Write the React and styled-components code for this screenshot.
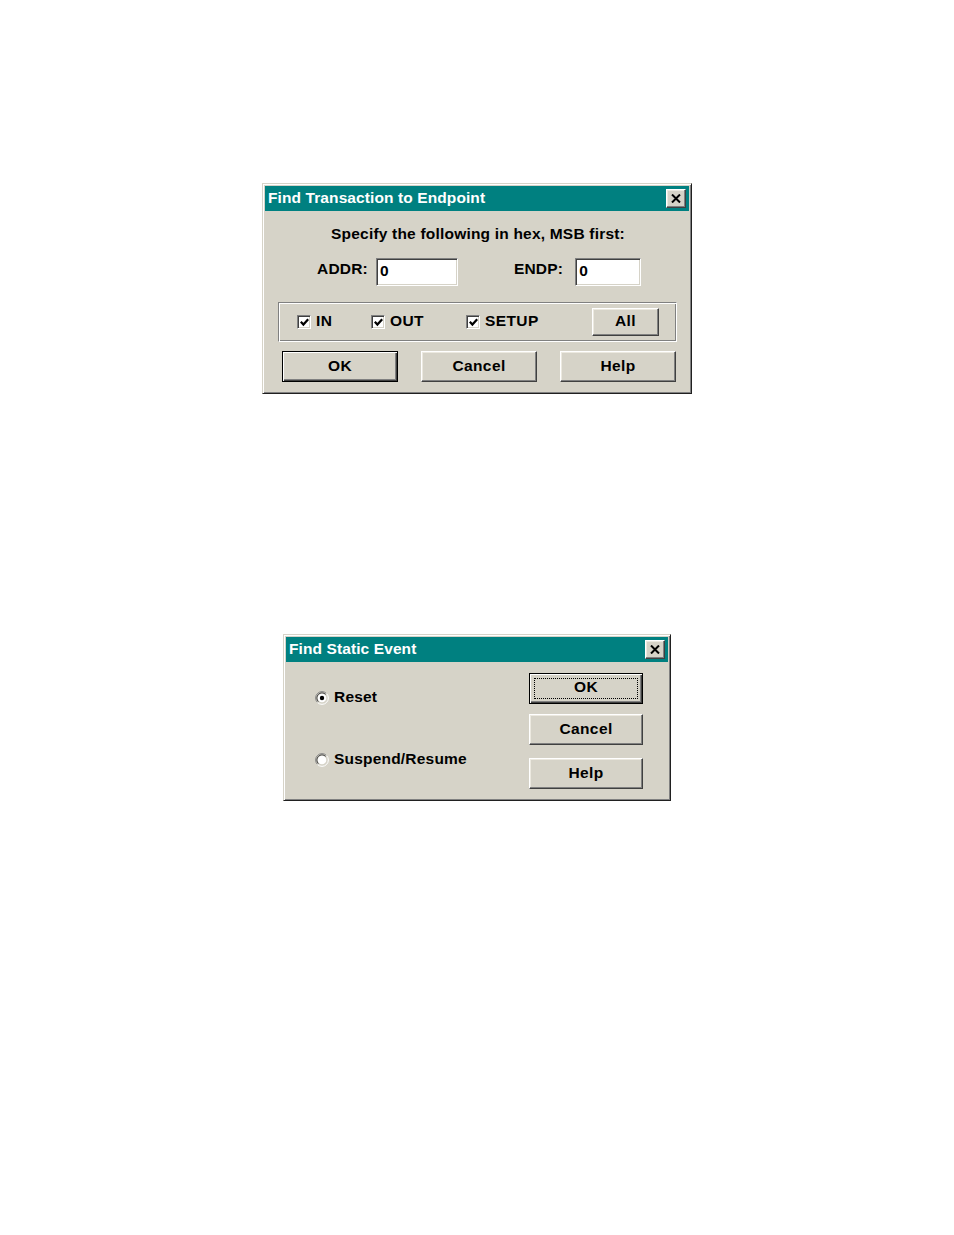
import React from "react";
import styled, { createGlobalStyle, css } from "styled-components";

const GlobalStyle = createGlobalStyle`
  html, body {
    margin: 0;
    padding: 0;
    background: #ffffff;
  }
  body {
    font-family: "Liberation Sans", Arial, sans-serif;
  }
`;

const face = "#d6d3c8";

const raised = css`
  background: ${face};
  border-top: 1px solid #ffffff;
  border-left: 1px solid #ffffff;
  border-right: 1px solid #404040;
  border-bottom: 1px solid #404040;
  box-shadow: inset -1px -1px 0 #808080, inset 1px 1px 0 #ece9e0;
`;

const sunken = css`
  border-top: 1px solid #808080;
  border-left: 1px solid #808080;
  border-right: 1px solid #ffffff;
  border-bottom: 1px solid #ffffff;
  box-shadow: inset 1px 1px 0 #404040, inset -1px -1px 0 ${face};
`;

const Page = styled.div`
  display: flex;
  flex-direction: column;
  align-items: flex-start;
  width: 954px;
  min-height: 1235px;
`;

const Window = styled.div`
  box-sizing: border-box;
  width: ${(p) => p.$w}px;
  height: ${(p) => p.$h}px;
  margin-top: ${(p) => p.$top}px;
  margin-left: ${(p) => p.$left}px;
  background: ${face};
  border-top: 1px solid ${face};
  border-left: 1px solid ${face};
  border-right: 1px solid #202020;
  border-bottom: 1px solid #202020;
  box-shadow: inset 1px 1px 0 #ffffff, inset -1px -1px 0 #808080;
  padding: 2px;
  display: flex;
  flex-direction: column;
  color: #000;
  font-weight: bold;
  font-size: 15.5px;
  letter-spacing: 0.2px;
`;

const TitleBar = styled.div`
  height: 25px;
  background: #008080;
  display: flex;
  align-items: center;
  justify-content: space-between;
  padding: 0 3px 0 3px;
  flex-shrink: 0;
`;

const Title = styled.span`
  color: #ffffff;
  font-size: 15.5px;
  font-weight: bold;
  letter-spacing: 0.1px;
  padding-bottom: 1px;
`;

const CloseBox = styled.div`
  box-sizing: border-box;
  width: 20px;
  height: 19px;
  ${raised};
  display: flex;
  align-items: center;
  justify-content: center;
`;

const Close = () => (
  <CloseBox>
    <svg width="10" height="9" viewBox="0 0 10 9">
      <path d="M1 0.5 L9 8.5 M9 0.5 L1 8.5" stroke="#000" strokeWidth="2" />
    </svg>
  </CloseBox>
);

/* ---------- dialog 1 ---------- */

const Body1 = styled.div`
  display: flex;
  flex-direction: column;
  padding: 14px 0 9px 0;
`;

const Prompt = styled.div`
  height: 18px;
  line-height: 18px;
  text-align: center;
  padding-left: 2px;
`;

const FieldRow = styled.div`
  display: flex;
  align-items: center;
  margin-top: 15px;
  height: 28px;
  padding-left: 52px;
`;

const Label = styled.span`
  margin-left: ${(p) => p.$ml || 0}px;
  margin-right: ${(p) => p.$mr}px;
  padding-bottom: 6px;
`;

const Input = styled.div`
  box-sizing: border-box;
  width: ${(p) => p.$w}px;
  height: 28px;
  background: #ffffff;
  ${sunken};
  font-size: 15.5px;
  line-height: 23px;
  padding-left: 3px;
`;

const Group = styled.div`
  box-sizing: border-box;
  margin: 16px 12px 0 13px;
  height: 40px;
  border-top: 1px solid #808080;
  border-left: 1px solid #808080;
  border-right: 1px solid #ffffff;
  border-bottom: 1px solid #ffffff;
  box-shadow: inset 1px 1px 0 #ffffff, inset -1px -1px 0 #808080;
  display: grid;
  grid-template-columns: 74px 95px 126px 67px;
  align-items: center;
  padding-left: 18px;
`;

const Check = styled.label`
  display: flex;
  align-items: center;
  gap: 5px;
  letter-spacing: 0.4px;
`;

const CheckText = styled.span`
  padding-bottom: 3px;
`;

const CheckBox = styled.span`
  box-sizing: border-box;
  width: 14px;
  height: 14px;
  background: #ffffff;
  ${sunken};
  display: flex;
  align-items: center;
  justify-content: center;
`;

const CheckItem = ({ children }) => (
  <Check>
    <CheckBox>
      <svg width="9" height="9" viewBox="0 0 9 9">
        <path d="M0.8 3.8 L3.4 6.6 L8.2 1.2" stroke="#000" strokeWidth="2.2" fill="none" />
      </svg>
    </CheckBox>
    <CheckText>{children}</CheckText>
  </Check>
);

const Button = styled.div`
  box-sizing: border-box;
  width: ${(p) => p.$w}px;
  height: ${(p) => p.$h}px;
  margin-top: ${(p) => p.$mt || 0}px;
  ${raised};
  display: flex;
  align-items: center;
  justify-content: center;
  padding-bottom: 2px;
  letter-spacing: 0.4px;
  ${(p) =>
    p.$default &&
    css`
      border: 1px solid #000;
      box-shadow: inset 1px 1px 0 #ffffff, inset -1px -1px 0 #404040,
        inset -2px -2px 0 #808080;
    `}
`;

const FocusRing = styled.span`
  box-sizing: border-box;
  display: flex;
  align-items: center;
  justify-content: center;
  width: calc(100% - 8px);
  height: calc(100% - 6px);
  border: 1px dotted #000;
  padding-bottom: 3px;
  margin-top: 2px;
`;

const ButtonRow = styled.div`
  display: flex;
  gap: 23px;
  margin-top: 9px;
  padding-left: 17px;
`;

/* ---------- dialog 2 ---------- */

const Body2 = styled.div`
  display: grid;
  grid-template-columns: 1fr 114px;
  padding: 11px 25px 0 0;
`;

const Radios = styled.div`
  display: flex;
  flex-direction: column;
  gap: 42px;
  padding: 15px 0 0 29px;
`;

const Radio = styled.label`
  display: flex;
  align-items: center;
  gap: 5px;
  height: 20px;
`;

const RadioText = styled.span`
  padding-bottom: 3px;
`;

const RadioDot = ({ on }) => (
  <svg width="14" height="14" viewBox="0 0 14 14">
    <path d="M11.5 2.5 A6 6 0 0 0 2.5 11.5" stroke="#808080" strokeWidth="1" fill="none" />
    <path d="M10.6 3.4 A4.8 4.8 0 0 0 3.4 10.6" stroke="#404040" strokeWidth="1" fill="none" />
    <path d="M2.5 11.5 A6 6 0 0 0 11.5 2.5" stroke="#ffffff" strokeWidth="1" fill="none" />
    <circle cx="7" cy="7" r="4.3" fill="#ffffff" />
    {on && <circle cx="7" cy="7" r="2.2" fill="#000" />}
  </svg>
);

const Stack = styled.div`
  display: flex;
  flex-direction: column;
  gap: 10px;
`;

export default function App() {
  return (
    <>
      <GlobalStyle />
      <Page>
        <Window $w={430} $h={211} $top={183} $left={262}>
          <TitleBar>
            <Title>Find Transaction to Endpoint</Title>
            <Close />
          </TitleBar>
          <Body1>
            <Prompt>Specify the following in hex, MSB first:</Prompt>
            <FieldRow>
              <Label $mr={8}>ADDR:</Label>
              <Input $w={82}>0</Input>
              <Label $ml={56} $mr={12}>ENDP:</Label>
              <Input $w={66}>0</Input>
            </FieldRow>
            <Group>
              <CheckItem>IN</CheckItem>
              <CheckItem>OUT</CheckItem>
              <CheckItem>SETUP</CheckItem>
              <Button $w={67} $h={28}>All</Button>
            </Group>
            <ButtonRow>
              <Button $w={116} $h={31} $default>OK</Button>
              <Button $w={116} $h={31}>Cancel</Button>
              <Button $w={116} $h={31}>Help</Button>
            </ButtonRow>
          </Body1>
        </Window>

        <Window $w={388} $h={167} $top={240} $left={283}>
          <TitleBar>
            <Title>Find Static Event</Title>
            <Close />
          </TitleBar>
          <Body2>
            <Radios>
              <Radio>
                <RadioDot on />
                <RadioText>Reset</RadioText>
              </Radio>
              <Radio>
                <RadioDot />
                <RadioText>Suspend/Resume</RadioText>
              </Radio>
            </Radios>
            <Stack>
              <Button $w={114} $h={31} $default>
                <FocusRing>OK</FocusRing>
              </Button>
              <Button $w={114} $h={31}>Cancel</Button>
              <Button $w={114} $h={31} $mt={3}>Help</Button>
            </Stack>
          </Body2>
        </Window>
      </Page>
    </>
  );
}
